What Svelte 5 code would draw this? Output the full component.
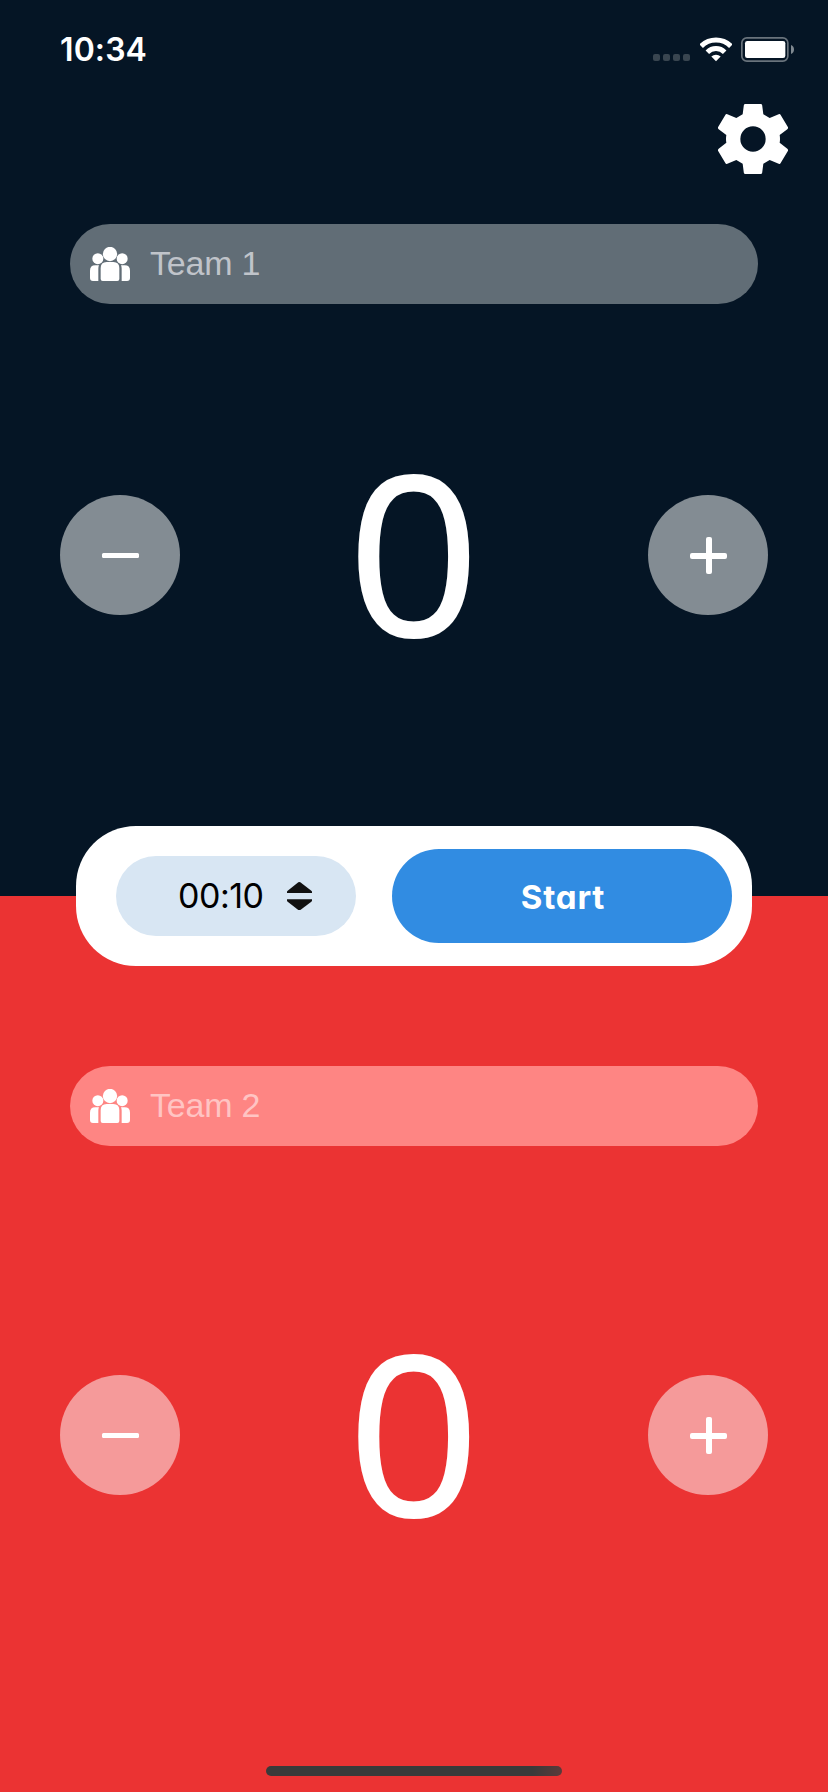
<script>
  let teams = $state([
    { id: 1, name: '', score: 0 },
    { id: 2, name: '', score: 0 }
  ]);
</script>

{#snippet teamPanel(team)}
  <label class="field">
    <svg width="40" height="34" viewBox="90 111 120 102" fill="#fff" aria-hidden="true">
      <circle cx="113.500" cy="146" r="16.500" />
      <circle cx="186.500" cy="146" r="16.500" />
      <circle cx="150" cy="132" r="21.500" />
      <path d="M106 166h11q-2 4-2 10v37H99q-9 0-9-9v-22q0-16 16-16z" />
      <path d="M194 166h-11q2 4 2 10v37h16q9 0 9-9v-22q0-16-16-16z" />
      <path d="M140 156h20q18 0 18 18v33q0 6-6 6h-44q-6 0-6-6v-33q0-18 18-18z" />
    </svg>
    <input bind:value={team.name} placeholder={`Team ${team.id}`} />
  </label>
  <div class="score-row">
    <button class="round" aria-label="Decrease" onclick={() => (team.score = Math.max(0, team.score - 1))}>
      <svg width="120" height="120" viewBox="0 0 120 120" fill="#fff"><rect x="42" y="58" width="37" height="5" rx="1.500" /></svg>
    </button>
    <span class="score">{team.score}</span>
    <button class="round" aria-label="Increase" onclick={() => team.score++}>
      <svg width="120" height="120" viewBox="0 0 120 120" fill="#fff">
        <rect x="42" y="58" width="37" height="6" rx="2" />
        <rect x="58" y="42" width="6" height="37" rx="2" />
      </svg>
    </button>
  </div>
{/snippet}

<main>
  <section class="top">
    <header>
      <span class="clock">10:34</span>
      <div class="status">
        <svg width="37" height="25" viewBox="69 51 111 75" fill="#394550">
          <rect x="69" y="102" width="21" height="21" rx="6" />
          <rect x="99" y="102" width="21" height="21" rx="6" />
          <rect x="129" y="102" width="21" height="21" rx="6" />
          <rect x="159" y="102" width="21" height="21" rx="6" />
        </svg>
        <svg width="32" height="25" viewBox="208.500 51 96 75" fill="none" stroke="#fff" stroke-width="15">
          <path d="M212 78.500A63 63 0 0 1 301 78.500" />
          <path d="M230.500 96.500A37 37 0 0 1 282.500 96.500" />
          <path d="M256.500 124L242.500 109.500A21 21 0 0 1 270.500 109.500Z" fill="#fff" stroke="none" />
        </svg>
        <svg width="53" height="25" viewBox="333 51 159 75">
          <rect x="335.500" y="53.500" width="138" height="70" rx="15" fill="none" stroke="#69737c" stroke-width="5" />
          <rect x="345" y="63" width="121" height="51" rx="7" fill="#fff" />
          <path d="M483 75q9 4 9 13.500t-9 13.500z" fill="#808991" />
        </svg>
      </div>
    </header>
    <button class="settings" aria-label="Settings">
      <svg width="70" height="70" viewBox="264 252 210 210" fill="#fff" fill-rule="evenodd">
        <path d="M346 252H392Q396 252 396.500 256L400 283L419 294L446 283Q450 281 452 285L474 322Q475 325 472 328L449 345Q451 357 449 368L472 386Q475 389 474 392L452 429Q450 433 446 431L419 420L400 431L396.500 458Q396 462 392 462H346Q342 462 341.500 458L338 431L319 420L292 431Q288 433 286 429L264 392Q263 389 266 386L289 368Q287 357 289 345L266 328Q263 325 264 322L286 285Q288 281 292 283L319 294L338 283L341.500 256Q342 252 346 252ZM369 319A38 38 0 1 0 369 395A38 38 0 1 0 369 319Z" />
      </svg>
    </button>
    {@render teamPanel(teams[0])}
  </section>

  <div class="timer">
    <button class="time">
      <span>00:10</span>
      <svg width="25" height="28.300" viewBox="680 215 75 85" fill="#111">
        <path d="M714 216q3-2 6 0l33 25q4 4 2 7H680q-2-3 2-7z" />
        <path d="M714 299q3 2 6 0l33-25q4-4 2-7H680q-2 3 2 7z" />
      </svg>
    </button>
    <button class="start">Start</button>
  </div>

  <section class="bottom">
    {@render teamPanel(teams[1])}
    <div class="home"></div>
  </section>
</main>

<style>
  :global(body) { margin: 0; }
  main { width: 828px; height: 1792px; overflow: hidden; display: flex; flex-direction: column; font-family: Inter, sans-serif; }
  button { border: 0; padding: 0; background: none; font: inherit; display: block; }
  svg { display: block; flex: none; }
  section { height: 896px; flex: none; box-sizing: border-box; display: flex; flex-direction: column; }
  .top { background: #051525; --field: #616d76; --hint: #c0c4ca; --round: #838c93; --gap: 191px; }
  .bottom { background: #eb3333; padding-top: 170px; --field: #fe8583; --hint: #ffc4c3; --round: #f59a9a; --gap: 229px; }
  header { height: 104px; box-sizing: border-box; padding: 37px 34px 0 60px; display: flex; justify-content: space-between; align-items: flex-start; }
  .clock { color: #fff; font-size: 32px; font-weight: 560; line-height: 25px; letter-spacing: 0.1px; }
  .status { display: flex; gap: 9.500px; }
  .settings { align-self: flex-end; margin-right: 40px; }
  .field { margin: 50px 70px 0; height: 80px; box-sizing: border-box; padding-left: 20px; border-radius: 40px; background: var(--field); display: flex; align-items: center; gap: 20px; }
  .bottom .field { margin-top: 0; }
  input { flex: 1; min-width: 0; border: 0; outline: 0; padding: 0 0 2px; background: none; color: #fff; font: 34px/40px "Liberation Sans", Arial, sans-serif; letter-spacing: -0.2px; }
  input::placeholder { color: var(--hint); opacity: 1; }
  .score-row { margin: var(--gap) 60px 0; height: 120px; display: flex; align-items: center; justify-content: space-between; }
  .round { width: 120px; height: 120px; border-radius: 50%; background: var(--round); }
  .score { padding-bottom: 9px; color: #fff; font: 221px/120px "Open Sans", "Noto Sans", sans-serif; -webkit-text-stroke: 2px #fff; transform: translateX(-0.5px) scaleX(1.045); }
  .timer { position: relative; z-index: 1; flex: none; width: 676px; height: 140px; margin: -70px auto; box-sizing: border-box; padding: 0 20px 0 40px; border-radius: 60px; background: #fff; display: flex; align-items: center; justify-content: space-between; }
  .time { width: 240px; height: 80px; box-sizing: border-box; padding: 0 44.500px 0 0; border-radius: 40px; background: #d8e6f3; display: flex; align-items: center; justify-content: flex-end; gap: 23px; color: #000; font-size: 34px; letter-spacing: -0.5px; }
  .time span { padding-bottom: 1px; }
  .start { width: 340px; height: 94px; padding: 2px 0 0 2px; border-radius: 47px; background: #318ce2; color: #fff; font-size: 33px; font-weight: 650; letter-spacing: 0.8px; font-feature-settings: "cv11"; }
  .home { width: 296px; height: 10px; margin: auto auto 16px; border-radius: 5px; background: linear-gradient(90deg, #3a3a3a 90%, #5b3a3a); }
</style>
